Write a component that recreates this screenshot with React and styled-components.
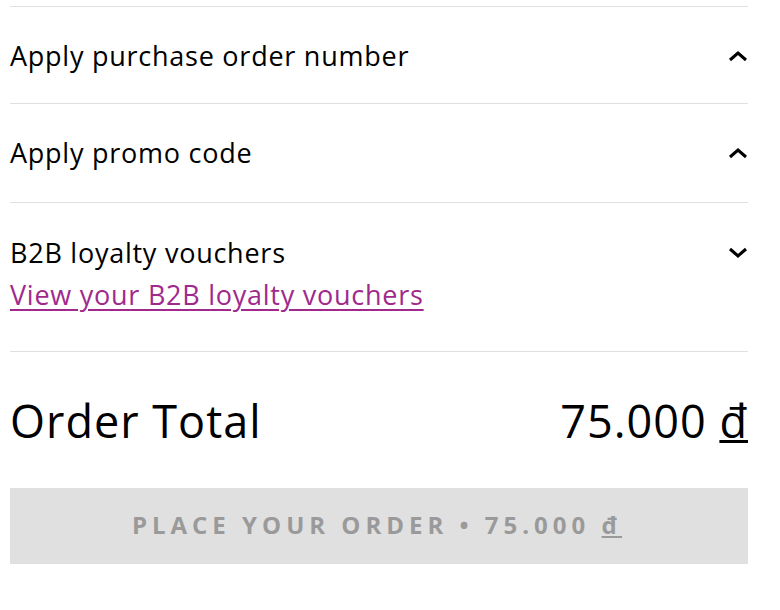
import React, { useState } from 'react'
import styled, { createGlobalStyle } from 'styled-components'

const GlobalStyle = createGlobalStyle`
  html, body {
    margin: 0;
    padding: 0;
    background: #fff;
  }
  body {
    font-family: 'Open Sans', 'Noto Sans', 'Liberation Sans', sans-serif;
    color: #000;
  }
`

const Page = styled.div`
  width: 738px;
  padding: 6px 32px 40px 10px;
`

const Section = styled.section`
  border-top: 1.5px solid #e0e0dc;
  padding: ${(p) => p.$padding || '30px 0'};
`

const Toggle = styled.button`
  all: unset;
  box-sizing: border-box;
  width: 100%;
  display: flex;
  align-items: center;
  justify-content: space-between;
  cursor: pointer;
  font-size: 27px;
  letter-spacing: 0.75px;
  line-height: 36px;
  color: #000;
`

const Chevron = styled.svg`
  width: 20px;
  height: 12px;
  flex: none;
`

const VoucherLink = styled.a`
  display: inline-block;
  font-size: 27px;
  letter-spacing: 0.75px;
  line-height: 36px;
  color: #a02a8c;
  text-decoration: underline;
  text-underline-offset: 4px;
  text-decoration-thickness: 2px;
  margin-top: 6px;
`

const TotalRow = styled.div`
  display: flex;
  justify-content: space-between;
  align-items: center;
  border-top: 1.5px solid #e0e0dc;
  padding: 39px 0 37px;
  font-size: 45px;
  letter-spacing: 1px;
  line-height: 60px;
`

const Currency = styled.span`
  text-decoration: underline;
  text-decoration-thickness: ${(p) => p.$thick || 3}px;
  text-underline-offset: 2px;
`

const PlaceButton = styled.button`
  display: flex;
  align-items: center;
  justify-content: center;
  width: 100%;
  height: 76px;
  border: none;
  background: #e0e0e0;
  color: #9a9a9a;
  font-family: 'Open Sans', 'Noto Sans', sans-serif;
  font-weight: 700;
  font-size: 24px;
  letter-spacing: 5px;
  padding: 0 4px 4px 0;
  cursor: not-allowed;
`

const Arrow = ({ up }) => (
  <Chevron viewBox="0 0 20 12">
    <path
      d={up ? 'M2 10 L10 3 L18 10' : 'M2 2 L10 9 L18 2'}
      fill="none"
      stroke="#000"
      strokeWidth="3"
    />
  </Chevron>
)

const Accordion = ({ title, open, children, padding }) => {
  const [isOpen, setOpen] = useState(open)
  return (
    <Section $padding={padding}>
      <Toggle onClick={() => setOpen(!isOpen)}>
        <span>{title}</span>
        <Arrow up={!isOpen} />
      </Toggle>
      {isOpen && children}
    </Section>
  )
}

export default function App() {
  return (
    <>
      <GlobalStyle />
      <Page>
        <Accordion title="Apply purchase order number" open={false} padding="31px 0 29px" />
        <Accordion title="Apply promo code" open={false} padding="31px 0 31px" />
        <Accordion title="B2B loyalty vouchers" open={true} padding="32px 0 38px">
          <VoucherLink href="#">View your B2B loyalty vouchers</VoucherLink>
        </Accordion>
        <TotalRow>
          <span>Order Total</span>
          <span>
            75.000 <Currency>đ</Currency>
          </span>
        </TotalRow>
        <PlaceButton disabled>
          PLACE YOUR ORDER • 75.000&nbsp;<Currency $thick={2}>đ</Currency>
        </PlaceButton>
      </Page>
    </>
  )
}
